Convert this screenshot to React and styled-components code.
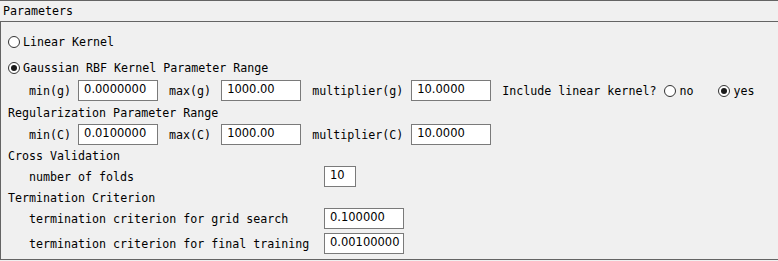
import React from "react"
import styled, { createGlobalStyle } from "styled-components"

const GlobalStyle = createGlobalStyle`
  html, body {
    margin: 0;
    padding: 0;
    background: #f0f0f0;
    overflow: hidden;
  }
`

const Window = styled.div`
  width: 778px;
  height: 261px;
  background: #f0f0f0;
  border-top: 1px solid #646464;
  box-sizing: border-box;
  font-family: "DejaVu Sans Mono", monospace;
  font-size: 11.65px;
  color: #000;
  overflow: hidden;
`

const Title = styled.div`
  height: 20px;
  line-height: 20px;
  padding-left: 3px;
`

const Panel = styled.div`
  width: 900px;
  height: 239px;
  box-sizing: border-box;
  border: 1px solid #646464;
  padding: 8px 0 0 0;
`

const Section = styled.div`
  display: flex;
  align-items: center;
  height: ${({ h }) => h || 21}px;
  margin-top: ${({ mt }) => mt || 0}px;
  padding-left: 7px;
  white-space: pre;
`

const Row = styled.div`
  display: flex;
  align-items: center;
  height: 21px;
  margin-top: ${({ mt }) => mt || 0}px;
  padding-left: 28px;
  white-space: pre;
`

const FieldRow = styled.div`
  display: grid;
  grid-template-columns: 295px auto;
  align-items: center;
  height: 21px;
  margin-top: ${({ mt }) => mt || 0}px;
  padding-left: 28px;
  white-space: pre;
`

const Label = styled.span`
  margin-left: ${({ ml }) => ml || 0}px;
  margin-right: ${({ mr }) => mr || 0}px;
`

const Input = styled.div`
  width: ${({ w }) => w || 80}px;
  height: 21px;
  box-sizing: border-box;
  border: 1px solid #7a7a7a;
  background: #fff;
  font-family: "DejaVu Sans", sans-serif;
  font-size: 11.5px;
  line-height: 17px;
  padding-left: 5px;
  white-space: nowrap;
`

const RadioLabel = styled.label`
  display: flex;
  align-items: center;
  gap: 3px;
  margin-left: ${({ ml }) => ml || 0}px;
`

const Circle = styled.span`
  width: 12px;
  height: 12px;
  box-sizing: border-box;
  border-radius: 50%;
  border: 1px solid #333;
  background: #fff;
  display: flex;
  align-items: center;
  justify-content: center;

  &::after {
    content: "";
    display: ${({ checked }) => (checked ? "block" : "none")};
    width: 6px;
    height: 6px;
    border-radius: 50%;
    background: #1a1a1a;
  }
`

const Radio = ({ checked, children, ml }) => (
  <RadioLabel ml={ml}>
    <Circle checked={checked} />
    <span>{children}</span>
  </RadioLabel>
)

const App = () => {
  return (
    <>
      <GlobalStyle />
      <Window>
        <Title>Parameters</Title>
        <Panel>
          <Section h={24}>
            <Radio>Linear Kernel</Radio>
          </Section>
          <Section h={22} mt={3}>
            <Radio checked>Gaussian RBF Kernel Parameter Range</Radio>
          </Section>
          <Row mt={1}>
            <Label mr={7}>min(g)</Label>
            <Input>0.0000000</Input>
            <Label ml={11} mr={10}>max(g)</Label>
            <Input>1000.00</Input>
            <Label ml={11} mr={8}>multiplier(g)</Label>
            <Input>10.0000</Input>
            <Label ml={11} mr={8}>Include linear kernel?</Label>
            <Radio>no</Radio>
            <Radio ml={25} checked>yes</Radio>
          </Row>
          <Section h={23}>Regularization Parameter Range</Section>
          <Row>
            <Label mr={7}>min(C)</Label>
            <Input>0.0100000</Input>
            <Label ml={11} mr={10}>max(C)</Label>
            <Input>1000.00</Input>
            <Label ml={11} mr={8}>multiplier(C)</Label>
            <Input>10.0000</Input>
          </Row>
          <Section>Cross Validation</Section>
          <FieldRow>
            <Label>number of folds</Label>
            <Input w={32}>10</Input>
          </FieldRow>
          <Section>Termination Criterion</Section>
          <FieldRow>
            <Label>termination criterion for grid search</Label>
            <Input>0.100000</Input>
          </FieldRow>
          <FieldRow mt={4}>
            <Label>termination criterion for final training</Label>
            <Input>0.00100000</Input>
          </FieldRow>
        </Panel>
      </Window>
    </>
  )
}

export default App
